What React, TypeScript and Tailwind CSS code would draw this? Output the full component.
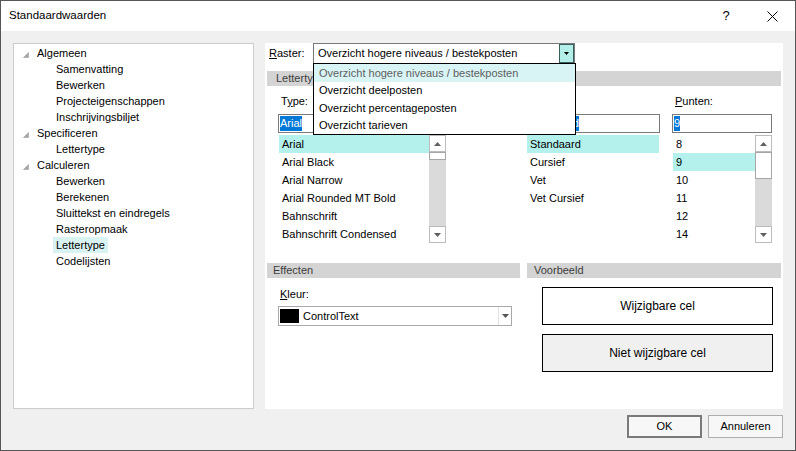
import React from "react";

type TreeItem = { label: string; level: number; selected?: boolean };

const tree: TreeItem[] = [
  { label: "Algemeen", level: 0 },
  { label: "Samenvatting", level: 1 },
  { label: "Bewerken", level: 1 },
  { label: "Projecteigenschappen", level: 1 },
  { label: "Inschrijvingsbiljet", level: 1 },
  { label: "Specificeren", level: 0 },
  { label: "Lettertype", level: 1 },
  { label: "Calculeren", level: 0 },
  { label: "Bewerken", level: 1 },
  { label: "Berekenen", level: 1 },
  { label: "Sluittekst en eindregels", level: 1 },
  { label: "Rasteropmaak", level: 1 },
  { label: "Lettertype", level: 1, selected: true },
  { label: "Codelijsten", level: 1 },
];

const fonts = [
  "Arial",
  "Arial Black",
  "Arial Narrow",
  "Arial Rounded MT Bold",
  "Bahnschrift",
  "Bahnschrift Condensed",
];
const styles = ["Standaard", "Cursief", "Vet", "Vet Cursief"];
const points = ["8", "9", "10", "11", "12", "14"];
const rasterOptions = [
  "Overzicht hogere niveaus / bestekposten",
  "Overzicht deelposten",
  "Overzicht percentageposten",
  "Overzicht tarieven",
];

function ExpandGlyph() {
  return (
    <svg width="6" height="6" viewBox="0 0 6 6" className="shrink-0 translate-y-[2px]">
      <path d="M5.5 0.5 L5.5 5.5 L0.5 5.5 Z" fill="#a9a9a9" stroke="#8f8f8f" strokeWidth="0.5" />
    </svg>
  );
}

function Arrow({ up, color = "#606060" }: { up?: boolean; color?: string }) {
  return (
    <svg width="7" height="4" viewBox="0 0 7 4">
      <path d={up ? "M0 4 L3.5 0 L7 4 Z" : "M0 0 L7 0 L3.5 4 Z"} fill={color} />
    </svg>
  );
}

function SmallDown() {
  return (
    <svg width="5" height="3" viewBox="0 0 5 3">
      <path d="M0 0 L5 0 L2.5 3 Z" fill="#000" />
    </svg>
  );
}

function VScroll({ thumbClass }: { thumbClass: string }) {
  return (
    <div className="flex h-full w-[17px] shrink-0 flex-col bg-[#dadada]">
      <div className="flex h-[17px] shrink-0 items-center justify-center border border-[#bcbcbc] bg-white">
        <Arrow up />
      </div>
      <div className={`shrink-0 border border-[#a6a6a6] bg-white ${thumbClass}`} />
      <div className="flex-1" />
      <div className="flex h-[17px] shrink-0 items-center justify-center border border-[#bcbcbc] bg-white">
        <Arrow />
      </div>
    </div>
  );
}

export default function App() {
  return (
    <div className="flex h-[451px] w-[796px] flex-col border border-[#555555] bg-[#f0f0f0] font-['Liberation_Sans',Arial,sans-serif] text-[11px] text-black">
      {/* Title bar */}
      <div className="flex h-[30px] shrink-0 items-center bg-white">
        <span className="pl-[8px] text-[11.5px]">Standaardwaarden</span>
        <div className="ml-auto flex h-full">
          <div className="flex w-[46px] items-center justify-center text-[13px]">?</div>
          <div className="flex w-[46px] items-center justify-center">
            <svg width="11" height="11" viewBox="0 0 11 11">
              <path d="M0.5 0.5 L10.5 10.5 M10.5 0.5 L0.5 10.5" stroke="#000" strokeWidth="1" />
            </svg>
          </div>
        </div>
      </div>

      {/* Body */}
      <div className="flex flex-col px-3 pt-3">
        <div className="flex h-[366px] gap-[11px]">
          {/* Tree */}
          <div className="flex w-[241px] flex-col border border-[#cccccc] bg-white pt-[1px]">
            {tree.map((t, i) =>
              t.level === 0 ? (
                <div key={i} className="flex h-4 items-center pl-[9px]">
                  <ExpandGlyph />
                  <span className="ml-[8px] leading-4">{t.label}</span>
                </div>
              ) : (
                <div key={i} className="flex h-4 items-center pl-[39px]">
                  <span className={`h-4 px-[3px] leading-4 ${t.selected ? "bg-[#d9f3f3]" : ""}`}>{t.label}</span>
                </div>
              )
            )}
          </div>

          {/* Right panel */}
          <div className="relative flex w-[518px] flex-col bg-white">
            {/* Raster row */}
            <div className="flex h-[21px] items-center">
              <span className="w-[48px] pl-[4px]">
                <span className="underline">R</span>aster:
              </span>
              <div className="flex h-[21px] w-[262px] items-stretch border border-[#7a7a7a] bg-white">
                <span className="flex flex-1 items-center pl-[4px]">Overzicht hogere niveaus / bestekposten</span>
                <div className="flex w-[15px] items-center justify-center border border-[#385e5e] bg-[#b3efe8]">
                  <SmallDown />
                </div>
              </div>
            </div>

            {/* Lettertype header */}
            <div className="mx-[2px] mt-[7px] flex h-[15px] items-center bg-[#d4d4d4] pl-[9px] text-[#3c3c3c]">
              Lettertype
            </div>

            {/* Columns */}
            <div className="mt-[8px] flex pl-[13px]">
              {/* Type */}
              <div className="flex w-[168px] flex-col">
                <span className="h-[14px] pl-[3px] leading-[14px]">
                  T<span className="underline">y</span>pe:
                </span>
                <div className="mt-[6px] flex h-[19px] items-center border border-[#7a7a7a] pl-[1px]">
                  <span className="bg-[#0078d7] leading-[15px] text-white">Arial</span>
                </div>
                <div className="ml-[1px] mt-[2px] flex h-[108px]">
                  <div className="flex flex-1 flex-col">
                    {fonts.map((f, i) => (
                      <div key={f} className={`flex h-[18px] items-center pl-[3px] ${i === 0 ? "bg-[#b4f0ec]" : ""}`}>
                        {f}
                      </div>
                    ))}
                  </div>
                  <VScroll thumbClass="h-[8px]" />
                </div>
              </div>

              {/* Stijl */}
              <div className="ml-[80px] flex w-[134px] flex-col">
                <span className="h-[14px] pl-[3px] leading-[14px]">
                  <span className="underline">S</span>tijl:
                </span>
                <div className="mt-[6px] flex h-[19px] items-center border border-[#7a7a7a] pl-[1px]">
                  <span className="bg-[#0078d7] leading-[15px] text-white">Standaard</span>
                </div>
                <div className="mx-[1px] mt-[2px] flex h-[108px] flex-col">
                  {styles.map((s, i) => (
                    <div key={s} className={`flex h-[18px] items-center pl-[3px] ${i === 0 ? "bg-[#b4f0ec]" : ""}`}>
                      {s}
                    </div>
                  ))}
                </div>
              </div>

              {/* Punten */}
              <div className="ml-[12px] flex w-[100px] flex-col">
                <span className="h-[14px] pl-[3px] leading-[14px]">
                  <span className="underline">P</span>unten:
                </span>
                <div className="mt-[6px] flex h-[19px] items-center border border-[#7a7a7a] pl-[1px]">
                  <span className="bg-[#0078d7] leading-[15px] text-white">9</span>
                </div>
                <div className="ml-[1px] mt-[2px] flex h-[108px]">
                  <div className="flex flex-1 flex-col">
                    {points.map((p, i) => (
                      <div key={p} className={`flex h-[18px] items-center pl-[3px] ${i === 1 ? "bg-[#b4f0ec]" : ""}`}>
                        {p}
                      </div>
                    ))}
                  </div>
                  <VScroll thumbClass="h-[27px]" />
                </div>
              </div>
            </div>

            {/* Effecten / Voorbeeld */}
            <div className="mx-[2px] mt-[20px] flex gap-[7px]">
              <div className="flex w-[253px] flex-col">
                <div className="flex h-[15px] items-center bg-[#d4d4d4] pl-[6px] text-[#3c3c3c]">Effecten</div>
                <span className="mt-[9px] h-[14px] pl-[13px] leading-[14px]">
                  <span className="underline">K</span>leur:
                </span>
                <div className="ml-[11px] mt-[5px] flex h-[20px] w-[234px] items-center border border-[#a9a9a9] bg-white">
                  <span className="ml-[1px] h-[14px] w-[19px] bg-black" />
                  <span className="ml-[4px] flex-1">ControlText</span>
                  <div className="flex h-full w-[13px] items-center justify-center border-l border-[#e3e3e3]">
                    <Arrow color="#555555" />
                  </div>
                </div>
              </div>
              <div className="flex w-[254px] flex-col">
                <div className="flex h-[15px] items-center bg-[#d4d4d4] pl-[7px] text-[#3c3c3c]">Voorbeeld</div>
                <div className="ml-[15px] mt-[9px] flex h-[38px] w-[231px] items-center justify-center border border-black bg-white text-[12px]">
                  Wijzigbare cel
                </div>
                <div className="ml-[15px] mt-[9px] flex h-[38px] w-[231px] items-center justify-center border border-black bg-[#f0f0f0] text-[12px]">
                  Niet wijzigbare cel
                </div>
              </div>
            </div>

            {/* Open dropdown list */}
            <div className="absolute left-[48px] top-[20px] z-10 flex w-[263px] flex-col border border-black bg-white">
              {rasterOptions.map((o, i) => (
                <div
                  key={o}
                  className={`flex h-[17.5px] items-center pl-[5px] ${i === 0 ? "bg-[#d9f4f4] text-[#606060]" : ""}`}
                >
                  {o}
                </div>
              ))}
            </div>
          </div>
        </div>

        {/* Buttons */}
        <div className="mt-[6px] flex justify-end gap-[6px]">
          <button className="flex h-[23px] w-[75px] items-center justify-center border-2 border-[#7a7a7a] bg-[#f7f7f7]">
            OK
          </button>
          <button className="flex h-[23px] w-[75px] items-center justify-center border border-[#adadad] bg-[#f7f7f7]">
            Annuleren
          </button>
        </div>
      </div>
    </div>
  );
}
